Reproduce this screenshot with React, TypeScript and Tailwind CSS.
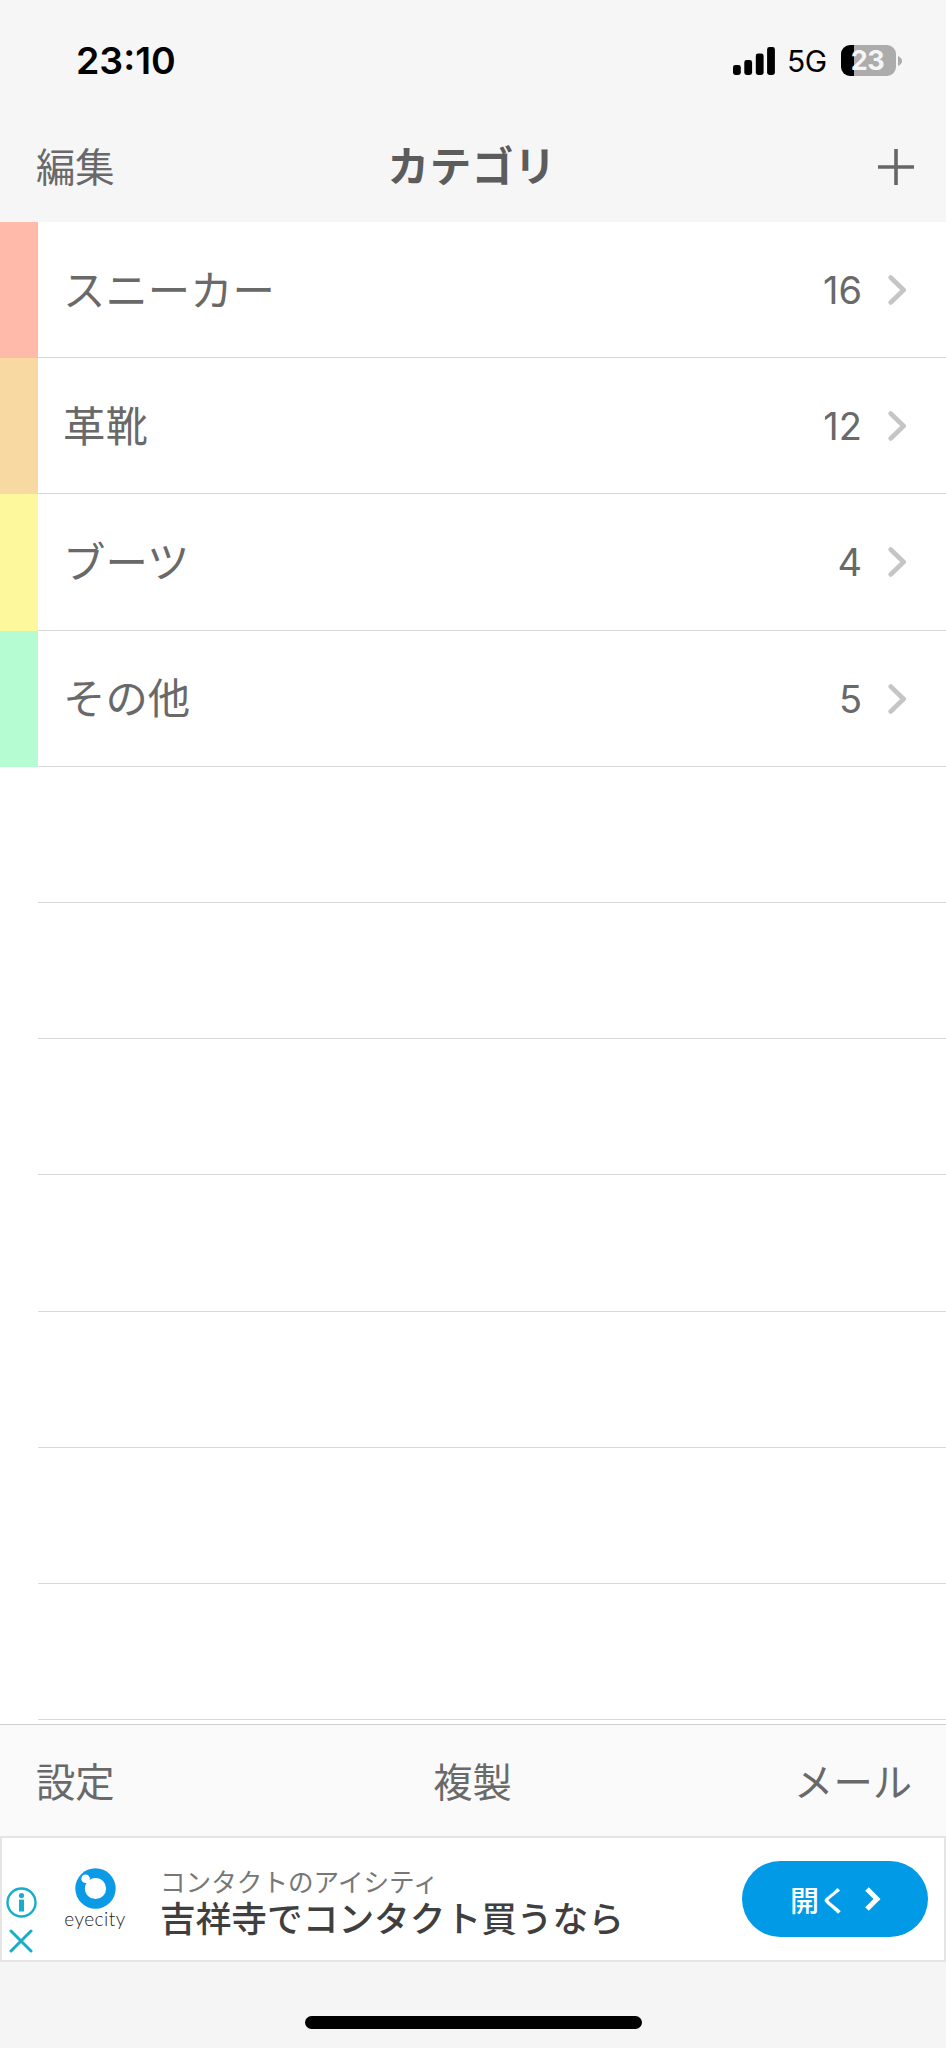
import React from "react";

interface Category {
  name: string;
  count: number;
  color: string;
}

const categories: Category[] = [
  { name: "スニーカー", count: 16, color: "bg-[#ffbaaa]" },
  { name: "革靴", count: 12, color: "bg-[#f8d9a2]" },
  { name: "ブーツ", count: 4, color: "bg-[#fef89c]" },
  { name: "その他", count: 5, color: "bg-[#b6fcd2]" },
];

const emptyRows = [1, 2, 3, 4, 5, 6, 7];

const StatusBar: React.FC = () => (
  <div className="flex h-[120px] items-center bg-[#f6f6f6] pt-px pl-[76px] pr-[44px] font-['Inter'] text-black">
    <span className="text-[37.5px] leading-none font-semibold">23:10</span>

    {/* Signal bars */}
    <svg className="ml-auto h-7 w-[42px]" viewBox="0 0 42 28">
      <rect x="0" y="18" width="7.8" height="10" rx="2.4" />
      <rect x="11.3" y="13" width="7.8" height="15" rx="2.4" />
      <rect x="22.8" y="6.5" width="7.8" height="21.5" rx="2.4" />
      <rect x="34.1" y="0" width="7.8" height="28" rx="2.4" />
    </svg>
    <span className="ml-[12px] w-[40px] pt-px text-[30px] leading-none tracking-[-0.5px]">
      5G
    </span>

    {/* Battery */}
    <div className="ml-[14px] flex h-[31px] w-[55px] items-center justify-center rounded-[9px] bg-[linear-gradient(90deg,#000_13px,#acacac_13px)] pr-[2px] text-[27px] leading-none font-bold tracking-[-0.5px] text-[#f5f5f5]">
      23
    </div>
    <svg className="ml-[2px] h-[10px] w-[4px]" viewBox="0 0 4 10">
      <path d="M0 0C2.5 1 4 3 4 5S2.5 9 0 10Z" fill="#acacac" />
    </svg>
  </div>
);

const NavBar: React.FC = () => (
  <div className="grid h-[102px] grid-cols-3 items-center bg-[#f6f6f6] pr-[32px] pb-[10px] pl-[36px]">
    <span className="pb-[2px] text-[39.3px] leading-none">編集</span>
    <h1 className="pr-[6px] pb-[3px] text-center text-[41.5px] leading-none font-bold tracking-[0.8px] text-[#5c5c5c]">
      カテゴリ
    </h1>
    <svg
      className="mt-[2px] h-9 w-9 justify-self-end"
      viewBox="0 0 36 36"
      stroke="#666"
      strokeWidth="3.6"
    >
      <path d="M0 18H36M18 0V36" />
    </svg>
  </div>
);

const CategoryRow: React.FC<Category> = ({ name, count, color }) => (
  <div className="flex h-[136.2px]">
    <div className={`w-[38px] ${color}`} />
    <div className="flex flex-1 items-center border-b border-[#d8d8da] pr-[39px] pl-[25px]">
      <span className="pb-[3px] text-[42.4px] leading-none">{name}</span>
      <span className="ml-auto pt-px font-['Inter'] text-[38px] leading-none">
        {count}
      </span>
      <svg
        className="mt-px ml-[26px] h-[30px] w-[19px]"
        viewBox="0 0 19 30"
        fill="none"
        stroke="#c5c5c7"
        strokeWidth="4.8"
        strokeLinecap="round"
        strokeLinejoin="round"
      >
        <path d="M2.8 2.6L15.6 15L2.8 27.4" />
      </svg>
    </div>
  </div>
);

const Toolbar: React.FC = () => (
  <div className="grid h-[112px] grid-cols-3 items-center border-t border-[#cfcfcf] bg-[#fafafa] pr-[34px] pb-[2px] pl-[36px] text-[39.3px] leading-none">
    <span>設定</span>
    <span className="pr-[3px] text-center">複製</span>
    <span className="text-right">メール</span>
  </div>
);

const AdBanner: React.FC = () => (
  <div className="flex h-[126px] items-center border-2 border-[#e5e5e5] bg-white pr-[16px]">
    {/* Ad choices */}
    <div className="flex w-[36px] flex-col items-center gap-[11px] pt-[42px] pl-[2px]">
      <svg className="h-[31px] w-[31px]" viewBox="0 0 31 31" fill="none">
        <circle cx="15.5" cy="15.5" r="14" stroke="#17aecb" strokeWidth="2.4" />
        <circle cx="15.5" cy="8.6" r="2.6" fill="#17aecb" />
        <path d="M15.5 12.6V24.5" stroke="#17aecb" strokeWidth="5" />
      </svg>
      <svg className="h-6 w-6" viewBox="0 0 24 24">
        <path
          d="M2 2L22 22M22 2L2 22"
          stroke="#17aecb"
          strokeWidth="3"
          strokeLinecap="round"
        />
      </svg>
    </div>

    {/* Advertiser logo */}
    <div className="ml-[25px] flex w-[64px] flex-col items-center">
      <svg className="h-[41px] w-[41px]" viewBox="0 0 41 41">
        <circle cx="20.5" cy="20.5" r="20.2" fill="#0a9ae6" />
        <circle cx="20.5" cy="20.5" r="10.6" fill="#fff" />
        <circle cx="10.6" cy="10.8" r="4.3" fill="#fff" />
        <path d="M10 11L16 17" stroke="#fff" strokeWidth="3" />
      </svg>
      <span className="-mt-px mb-px font-['Lato'] text-[19px] leading-[22px] font-light tracking-[0.5px] text-[#222]">
        eyecity
      </span>
    </div>

    <div className="ml-[33px] flex flex-col pt-[2px]">
      <span className="text-[25.6px] leading-[36px] text-[#777]">
        コンタクトのアイシティ
      </span>
      <span className="-mt-[3px] text-[35.7px] leading-[42px] font-medium text-[#3f3f3f]">
        吉祥寺でコンタクト買うなら
      </span>
    </div>

    <button className="ml-auto flex h-[76px] w-[186px] items-center rounded-full bg-[#019ae6] pl-[48px] text-[29px] leading-none font-medium text-white">
      開く
      <svg
        className="ml-[17px] h-6 w-4"
        viewBox="0 0 16 24"
        fill="none"
        stroke="#fff"
        strokeWidth="5"
      >
        <path d="M2 2L12 12L2 22" />
      </svg>
    </button>
  </div>
);

export default function App() {
  return (
    <div className="flex h-[2048px] w-[946px] flex-col bg-[#f5f5f5] font-['Noto_Sans_CJK_JP',sans-serif] text-[#696969]">
      <StatusBar />
      <NavBar />

      <div className="h-[1502px] overflow-hidden bg-white">
        {categories.map((category) => (
          <CategoryRow key={category.name} {...category} />
        ))}
        {emptyRows.map((row) => (
          <div
            key={row}
            className="ml-[38px] h-[136.2px] border-b border-[#d8d8da]"
          />
        ))}
      </div>

      <Toolbar />
      <AdBanner />

      {/* Home indicator */}
      <div className="mx-auto mt-[54px] h-[13px] w-[337px] rounded-full bg-black" />
    </div>
  );
}
